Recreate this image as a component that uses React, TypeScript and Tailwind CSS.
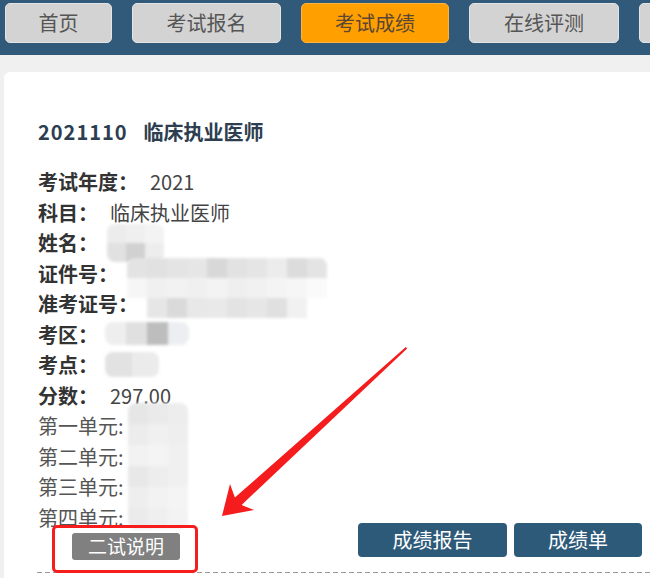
import React from "react";

const tabs = [
  { label: "首页", w: "w-[107px]", active: false },
  { label: "考试报名", w: "w-[149px]", active: false },
  { label: "考试成绩", w: "w-[148px]", active: true },
  { label: "在线评测", w: "w-[150px]", active: false },
  { label: "", w: "w-[150px]", active: false },
];

type Row = { label: string; value?: string; unit?: boolean };

const rows: Row[] = [
  { label: "考试年度：", value: "2021" },
  { label: "科目：", value: "临床执业医师" },
  { label: "姓名：" },
  { label: "证件号：" },
  { label: "准考证号：" },
  { label: "考区：" },
  { label: "考点：" },
  { label: "分数：", value: "297.00" },
  { label: "第一单元:", unit: true },
  { label: "第二单元:", unit: true },
  { label: "第三单元:", unit: true },
  { label: "第四单元:", unit: true },
];

// 打码块 (mosaic)
function Mosaic({ pos, cell, cells }: { pos: string; cell: string; cells: string[][] }) {
  return (
    <div className={`absolute ${pos} flex flex-col overflow-hidden rounded-[8px] blur-[1.5px]`}>
      {cells.map((r, i) => (
        <div key={i} className="flex">
          {r.map((c, j) => (
            <div key={j} className={`${cell} ${c}`} />
          ))}
        </div>
      ))}
    </div>
  );
}

export default function App() {
  return (
    <div className="relative h-[578px] w-[650px] overflow-hidden bg-[#f0f0f0] font-['Noto_Sans_CJK_SC','Microsoft_YaHei',sans-serif]">
      {/* nav */}
      <div className="flex h-[55px] gap-[20px] bg-[#31597a] pl-[5px] pt-[3px]">
        {tabs.map((t, i) => (
          <div
            key={i}
            className={`flex h-[40px] shrink-0 items-center justify-center rounded-[5px] border text-[20px] ${t.w} ${
              t.active
                ? "border-[#ffb340] bg-[#ff9f00] text-[#5a4632]"
                : "border-[#e4e4e4] bg-[#d3d3d3] text-[#555]"
            }`}
          >
            {t.label}
          </div>
        ))}
      </div>

      {/* card */}
      <div className="pl-[4px] pt-[17px]">
        <div className="h-[520px] rounded-tl-[6px] bg-white pl-[34px] pr-[8px]">
          <div className="flex pt-[45px] text-[20px] font-bold leading-[30px] text-[#2d3e50]">
            <span className="tracking-[1px]">2021110</span>
            <span className="ml-[16px]">临床执业医师</span>
          </div>
          <div className="mt-[20px] text-[20px] leading-[30.5px]">
            {rows.map((r) => (
              <div key={r.label} className="flex">
                <span className={r.unit ? "text-[#555]" : "font-bold text-[#333]"}>{r.label}</span>
                {r.value && <span className="ml-[12px] text-[#444]">{r.value}</span>}
              </div>
            ))}
          </div>

          {/* bottom buttons */}
          <div className="-mt-[10px] flex items-start">
            <div className="ml-[34px] mt-[10px] flex h-[27px] w-[108px] items-center justify-center rounded-[3px] bg-[#808080] text-[19px] text-white">
              二试说明
            </div>
            <div className="ml-auto flex gap-[7px]">
              <div className="flex h-[34px] w-[149px] items-center justify-center rounded-[4px] bg-[#2e5a7a] text-[20px] text-white">
                成绩报告
              </div>
              <div className="flex h-[34px] w-[128px] items-center justify-center rounded-[4px] bg-[#2e5a7a] text-[20px] text-white">
                成绩单
              </div>
            </div>
          </div>
          <div className="-mr-[8px] -ml-[1px] mt-[12px] h-px bg-[linear-gradient(to_right,#9a9a9a_5px,transparent_5px)] bg-[length:8px_1px]" />
        </div>
      </div>

      {/* mosaics over private values */}
      <Mosaic
        pos="left-[107px] top-[224px]"
        cell="h-[19px] w-[19px]"
        cells={[
          ["bg-[#ececec]", "bg-[#efefef]", "bg-[#f3f3f3]"],
          ["bg-[#e1e1e1]", "bg-[#d1d1d1]", "bg-[#ededed]"],
        ]}
      />
      <Mosaic
        pos="left-[127px] top-[258px]"
        cell="h-[20px] w-[20px]"
        cells={[
          ["bg-[#e3e3e3]", "bg-[#e1e1e1]", "bg-[#e4e4e4]", "bg-[#e6e6e6]", "bg-[#d8d8d8]", "bg-[#e2e2e2]", "bg-[#e5e5e5]", "bg-[#ececec]", "bg-[#dcdcdc]", "bg-[#e4e4e4]"],
          ["bg-[#f6f6f6]", "bg-[#f0f0f0]", "bg-[#f2f2f2]", "bg-[#f0f0f0]", "bg-[#f3f3f3]", "bg-[#efefef]", "bg-[#f1f1f1]", "bg-[#f4f4f4]", "bg-[#f6f6f6]", "bg-[#fafafa]"],
          ["bg-white", "bg-[#e6e6e6]", "bg-[#dadada]", "bg-[#e8e8e8]", "bg-[#e9e9e9]", "bg-[#e3e3e3]", "bg-[#e6e6e6]", "bg-[#e0e0e0]", "bg-[#f1f1f1]", "bg-white"],
        ]}
      />
      <Mosaic
        pos="left-[105px] top-[322px]"
        cell="h-[23px] w-[21px]"
        cells={[["bg-[#eeeeee]", "bg-[#e0e0e0]", "bg-[#bdbdbd]", "bg-[#eceef2]"]]}
      />
      <Mosaic
        pos="left-[105px] top-[352px]"
        cell="h-[25px] w-[27px]"
        cells={[["bg-[#e2e2e2]", "bg-[#ebebeb]"]]}
      />
      <Mosaic
        pos="left-[128px] top-[403px]"
        cell="h-[21px] w-[20px]"
        cells={[
          ["bg-[#e6e6e6]", "bg-[#eaeaea]", "bg-[#ededed]"],
          ["bg-[#ececec]", "bg-[#f0f0f0]", "bg-[#eeeeee]"],
          ["bg-[#f2f2f2]", "bg-[#f4f4f4]", "bg-[#f0f0f0]"],
          ["bg-[#e8e8e8]", "bg-[#ededed]", "bg-[#f0f0f0]"],
          ["bg-[#eeeeee]", "bg-[#f2f2f2]", "bg-[#f4f4f4]"],
          ["bg-[#ebebeb]", "bg-[#efefef]", "bg-[#f3f3f3]"],
        ]}
      />

      {/* red annotation */}
      <div className="pointer-events-none absolute left-[52px] top-[525px] h-[48px] w-[146px] rounded-[5px] border-[3px] border-[#f81d1d]" />
      <svg className="pointer-events-none absolute left-0 top-0" width="650" height="578">
        <polygon
          points="222,516 254,510 241.6,504.9 407.2,348.5 405.8,347 234.9,497.5 230,484"
          fill="#f41c1c"
        />
      </svg>
    </div>
  );
}
